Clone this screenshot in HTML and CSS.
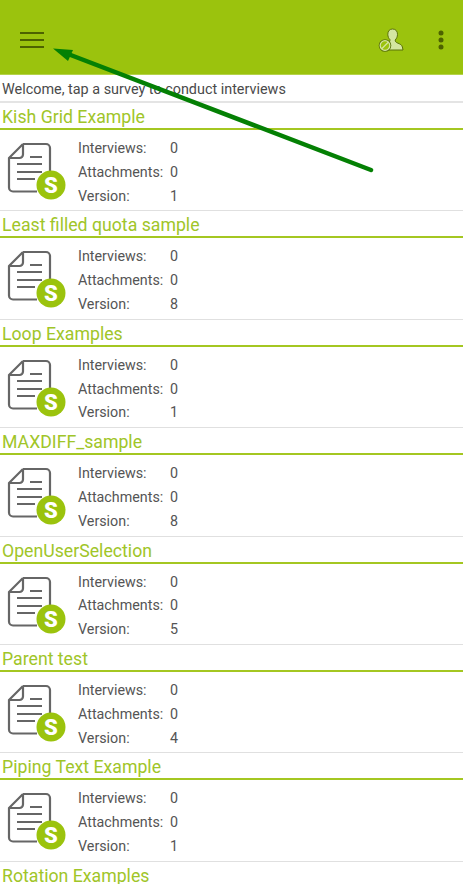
FILE: index.html
```html
<!DOCTYPE html>
<html lang="en">
<head>
  <meta charset="UTF-8">
  <meta name="viewport" content="width=device-width, initial-scale=1.0">
  <title>Surveys</title>
  <link rel="stylesheet" href="styles.css">
</head>
<body>
  <div class="screen">
    <header class="toolbar">
      <svg class="menu-icon" width="24" height="16" viewBox="0 0 24 16">
        <path d="M0 1h24M0 8h24M0 15h24" stroke="#4d6200" stroke-width="2.200" fill="none"/>
      </svg>
      <div class="toolbar-actions">
        <svg class="user-icon" width="26" height="26" viewBox="0 0 26 26">
          <path d="M14.500 2c-3 0-4.700 2.200-4.700 5.200 0 2.500 1 4.300 2.200 5.500 0 1.400-.4 2.200-1.500 2.900 1.600 2 1.500 5.400-.5 7.400H25l-.6-3c-.5-2-2.300-3-4.400-3.800-2-.8-2.800-1.400-2.800-3.200 1.300-1.300 2.300-3.200 2.300-5.700 0-3-1.700-5.300-5-5.300z" fill="#d4e6a0" stroke="#5b7308" stroke-width="1"/>
          <circle cx="7" cy="18.500" r="6.300" fill="#5b7308"/>
          <circle cx="7" cy="18.500" r="4.800" fill="#9bc30d" stroke="#d4e6a0" stroke-width="1.300"/>
          <path d="M3.500 22l7-7" stroke="#d4e6a0" stroke-width="1.300"/>
        </svg>
        <svg class="more-icon" width="6" height="20" viewBox="0 0 6 20">
          <circle cx="3" cy="3" r="2.500" fill="#4d6200"/>
          <circle cx="3" cy="10" r="2.500" fill="#4d6200"/>
          <circle cx="3" cy="17" r="2.500" fill="#4d6200"/>
        </svg>
      </div>
    </header>

    <p class="welcome">Welcome, tap a survey to conduct interviews</p>

    <ul class="survey-list" id="surveyList"></ul>

    <!-- annotation drawn over the screenshot -->
    <svg class="arrow" width="463" height="884" viewBox="0 0 463 884">
      <path d="M371 170L68 54" stroke="#048004" stroke-width="4.500" stroke-linecap="round" fill="none"/>
      <path d="M53 48.500L73 50L68 61z" fill="#048004"/>
    </svg>
  </div>

  <script src="app.js"></script>
</body>
</html>
```

FILE: styles.css
```css
/* Basic Reset */
* {
  margin: 0;
  padding: 0;
  box-sizing: border-box;
  font-family: Roboto, Arial, sans-serif;
}

body {
  background-color: #fff;
  overflow: hidden;
}

.screen {
  position: relative;
  width: 463px;
  height: 884px;
  overflow: hidden;
}

/* Toolbar */
.toolbar {
  display: flex;
  align-items: center;
  justify-content: space-between;
  height: 75px;
  padding: 6px 19px 0 20px;
  background-color: #9bc30d;
  border-bottom: 1px solid #b5d34a;
}

.toolbar-actions {
  display: flex;
  align-items: center;
  gap: 34px;
}

.welcome {
  height: 28px;
  padding: 6px 2px 0;
  font-size: 14.4px;
  line-height: 17px;
  color: #4a4a4a;
  border-bottom: 2px solid #e4e4e4;
}

/* Survey list */
.survey-list {
  list-style: none;
}

.survey {
  height: 108.4px;
  border-bottom: 1px solid #e0e0e0;
}

.survey-title {
  height: 27px;
  padding: 7px 2px 0;
  font-size: 17.7px;
  font-weight: 400;
  line-height: 14px;
  color: #a0c528;
  border-bottom: 2px solid #a4c721;
}

.survey-body {
  display: flex;
  padding: 6px 0 0 7px;
}

.survey-icon {
  flex: none;
  width: 60px;
  height: 60px;
  margin-top: 6px;
}

.survey-icon-letter {
  font-size: 22px;
  font-weight: 900;
  fill: #fff;
}

.stats {
  display: grid;
  grid-template-columns: 92px auto;
  grid-auto-rows: 23.8px;
  margin: 0 0 0 11px;
  font-size: 14.3px;
  line-height: 24px;
  color: #555;
}

/* Annotation */
.arrow {
  position: absolute;
  top: 0;
  left: 0;
}
```

FILE: app.js
```js
const surveys = [
  { name: "Kish Grid Example", version: 1 },
  { name: "Least filled quota sample", version: 8 },
  { name: "Loop Examples", version: 1 },
  { name: "MAXDIFF_sample", version: 8 },
  { name: "OpenUserSelection", version: 5 },
  { name: "Parent test", version: 4 },
  { name: "Piping Text Example", version: 1 },
  { name: "Rotation Examples" }, // body is below the fold
];

const iconSvg = `
  <svg class="survey-icon" viewBox="0 0 60 60">
    <path d="M16 2H39a4 4 0 0 1 4 4V36M30 49.500H6a4 4 0 0 1-4-4V16L16 2" fill="none" stroke="#666" stroke-width="2.200" stroke-linejoin="round"/>
    <path d="M16 2V12.500a3.500 3.500 0 0 1-3.500 3.500H2" fill="none" stroke="#666" stroke-width="2.200"/>
    <path d="M23 15H35M10 22H35M10 30H35M10 37H28" fill="none" stroke="#666" stroke-width="2.200"/>
    <circle cx="44" cy="43" r="14.500" fill="#9bc30d"/>
    <text class="survey-icon-letter" x="44" y="50.800" text-anchor="middle">S</text>
  </svg>`;

// Each survey row has the same stats, only the version changes
const list = document.getElementById("surveyList");
surveys.forEach((survey) => {
  const item = document.createElement("li");
  item.className = "survey";
  const body = survey.version === undefined ? "" : `
    <div class="survey-body">
      ${iconSvg}
      <dl class="stats">
        <dt>Interviews:</dt><dd>0</dd>
        <dt>Attachments:</dt><dd>0</dd>
        <dt>Version:</dt><dd>${survey.version}</dd>
      </dl>
    </div>`;
  item.innerHTML = `<h3 class="survey-title">${survey.name}</h3>${body}`;
  list.appendChild(item);
});
```
